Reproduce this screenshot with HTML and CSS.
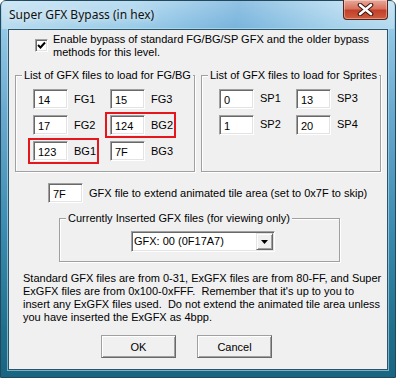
FILE: index.html
```html
<!DOCTYPE html>
<html>
<head>
  <title>Super GFX Bypass (in hex)</title>
  <link rel="stylesheet" href="styles.css">
</head>
<body>
  <div class="window">
    <div class="titlebar">
      <span class="title">Super GFX Bypass (in hex)</span>
      <div class="close">
        <svg width="17" height="13" viewBox="0 0 17 13">
          <path d="M3 2 L14 11 M14 2 L3 11" stroke="#3b1410" stroke-width="4.6" stroke-linecap="round" fill="none"/>
          <path d="M3 2 L14 11 M14 2 L3 11" stroke="#ffffff" stroke-width="2.6" stroke-linecap="round" fill="none"/>
        </svg>
      </div>
    </div>

    <div class="client">
      <div class="check-row">
        <span class="checkbox">
          <svg width="9" height="9" viewBox="0 0 9 9">
            <path d="M1 4 L3.5 6.5 L8 1.5" stroke="#000" stroke-width="2" fill="none"/>
          </svg>
        </span>
        <span class="check-text">Enable bypass of standard FG/BG/SP GFX and the older bypass<br>methods for this level.</span>
      </div>

      <div class="groups">
        <div class="group">
          <div class="group-title">List of GFX files to load for FG/BG</div>
          <div class="grid">
            <div class="cell"><input class="field" value="14"><span>FG1</span></div>
            <div class="cell"><input class="field" value="15"><span>FG3</span></div>
            <div class="cell"><input class="field" value="17"><span>FG2</span></div>
            <div class="cell hl"><input class="field" value="124"><span>BG2</span></div>
            <div class="cell hl"><input class="field" value="123"><span>BG1</span></div>
            <div class="cell"><input class="field" value="7F"><span>BG3</span></div>
          </div>
        </div>

        <div class="group">
          <div class="group-title">List of GFX files to load for Sprites</div>
          <div class="grid sprites">
            <div class="cell"><input class="field" value="0"><span>SP1</span></div>
            <div class="cell"><input class="field" value="13"><span>SP3</span></div>
            <div class="cell"><input class="field" value="1"><span>SP2</span></div>
            <div class="cell"><input class="field" value="20"><span>SP4</span></div>
          </div>
        </div>
      </div>

      <div class="extend-row">
        <input class="field" value="7F">
        <span>GFX file to extend animated tile area (set to 0x7F to skip)</span>
      </div>

      <div class="group viewer">
        <div class="group-title">Currently Inserted GFX files (for viewing only)</div>
        <div class="combo">
          <span class="combo-text">GFX: 00 (0F17A7)</span>
          <span class="combo-btn">
            <svg width="7" height="4" viewBox="0 0 7 4"><path d="M0 0 H7 L3.5 4 Z" fill="#000"/></svg>
          </span>
        </div>
      </div>

      <p class="note">Standard GFX files are from 0-31, ExGFX files are from 80-FF, and Super<br>ExGFX files are from 0x100-0xFFF.&nbsp; Remember that it's up to you to<br>insert any ExGFX files used.&nbsp; Do not extend the animated tile area unless<br>you have inserted the ExGFX as 4bpp.</p>

      <div class="buttons">
        <button class="btn default">OK</button>
        <button class="btn">Cancel</button>
      </div>
    </div>
  </div>
</body>
</html>
```

FILE: styles.css
```css
html, body {
  margin: 0;
  padding: 0;
}

body {
  width: 396px;
  height: 378px;
  overflow: hidden;
  font-family: "Liberation Sans", Arial, sans-serif;
  font-size: 11px;
  color: #000;
}

.window {
  width: 396px;
  height: 378px;
  box-sizing: border-box;
  padding: 0 7px 7px 7px;
  border: 1px solid #23475b;
  border-radius: 6px 6px 0 0;
  background: linear-gradient(180deg, #b6dbf0 0px, #93c8e6 28px, #6aaad0 110px, #3b8bb0 230px, #1f6f8c 330px, #186581 378px);
  display: flex;
  flex-direction: column;
  margin: 0;
}

.titlebar {
  height: 28px;
  display: flex;
  align-items: flex-start;
  margin: 0 -6px 0 -6px;
  padding: 0 6px;
  background: linear-gradient(100deg, rgba(255,255,255,0.35) 0%, rgba(255,255,255,0.05) 35%, rgba(40,120,190,0.25) 60%, rgba(255,255,255,0.15) 85%, rgba(255,255,255,0.3) 100%);
}

.title {
  font-family: "Noto Sans", "Open Sans", sans-serif;
  font-size: 12px;
  line-height: 16px;
  margin: 6px 0 0 1px;
  color: #111;
  text-shadow: 0 0 6px rgba(255,255,255,0.9);
}

.close {
  margin-left: auto;
  width: 43px;
  height: 19px;
  margin-top: -1px;
  border: 1px solid #5a2218;
  border-top: none;
  border-radius: 0 0 4px 4px;
  background: linear-gradient(180deg, #e9a99a 0%, #d8735f 45%, #c2402a 55%, #cf5d3f 100%);
  display: flex;
  align-items: center;
  justify-content: center;
  box-shadow: inset 0 0 0 1px rgba(255,255,255,0.35);
}

.client {
  flex: 1;
  background: #f0f0f0;
  border: 1px solid #2c5468;
  box-shadow: 0 0 0 1px rgba(190,225,240,0.6);
  display: flex;
  flex-direction: column;
}

.check-row {
  display: flex;
  align-items: flex-start;
  padding-left: 26px;
  margin-top: 3px;
  line-height: 13px;
}

.checkbox {
  width: 11px;
  height: 11px;
  margin-top: 6px;
  margin-right: 5px;
  background: #fff;
  border: 1px solid;
  border-color: #a0a0a0 #fff #fff #a0a0a0;
  box-shadow: inset 1px 1px 0 #696969, inset -1px -1px 0 #e3e3e3;
  display: flex;
  align-items: center;
  justify-content: center;
}

.check-text {
  white-space: nowrap;
}

.groups {
  display: flex;
  gap: 6px;
  padding-left: 6px;
  margin-top: 16px;
}

.group {
  width: 180px;
  height: 97px;
  box-sizing: border-box;
  border: 1px solid #a0a0a0;
  box-shadow: inset 1px 1px 0 #fff, 1px 1px 0 #fff;
}

.group-title {
  width: fit-content;
  margin: -7px 0 0 6px;
  padding: 0 2px;
  line-height: 13px;
  background: #f0f0f0;
  white-space: nowrap;
}

.grid {
  display: grid;
  grid-template-columns: 77px 77px;
  row-gap: 6px;
  padding-left: 17px;
  margin-top: 7px;
}

.cell {
  position: relative;
  display: flex;
  align-items: center;
  gap: 6px;
  height: 20px;
}

.sprites .cell span {
  margin-top: -3px;
}

.cell.hl::after {
  content: "";
  position: absolute;
  left: -5px;
  top: -3px;
  bottom: -3px;
  width: 71px;
  box-sizing: border-box;
  border: 2px solid #e5161c;
}

.field {
  width: 35px;
  height: 20px;
  box-sizing: border-box;
  margin: 0;
  padding: 1px 0 0 4px;
  font-family: "Liberation Sans", Arial, sans-serif;
  font-size: 11px;
  color: #000;
  background: #fff;
  border: 1px solid;
  border-color: #a0a0a0 #fff #fff #a0a0a0;
  box-shadow: inset 1px 1px 0 #696969, inset -1px -1px 0 #e3e3e3;
  outline: none;
}

.extend-row {
  display: flex;
  align-items: center;
  gap: 6px;
  padding-left: 39px;
  margin-top: 11px;
  white-space: nowrap;
}

.viewer {
  width: 281px;
  height: 44px;
  margin: 15px 0 0 50px;
}

.combo {
  width: 144px;
  height: 21px;
  box-sizing: border-box;
  margin: 6px 0 0 71px;
  background: #fff;
  border: 1px solid;
  border-color: #a0a0a0 #fff #fff #a0a0a0;
  box-shadow: inset 1px 1px 0 #696969, inset -1px -1px 0 #e3e3e3;
  display: flex;
  align-items: stretch;
}

.combo-text {
  flex: 1;
  padding: 3px 0 0 2px;
}

.combo-btn {
  width: 15px;
  margin: 1px 1px 1px 0;
  background: #f0f0f0;
  border: 1px solid;
  border-color: #e3e3e3 #696969 #696969 #e3e3e3;
  box-shadow: inset 1px 1px 0 #fff, inset -1px -1px 0 #a0a0a0;
  display: flex;
  align-items: center;
  justify-content: center;
}

.note {
  margin: 10px 0 0 0;
  padding-left: 14px;
  line-height: 13px;
  white-space: nowrap;
}

.buttons {
  display: flex;
  gap: 21px;
  padding-left: 92px;
  margin-top: 11px;
}

.btn {
  width: 75px;
  height: 23px;
  margin: 0;
  padding: 0;
  font-family: "Liberation Sans", Arial, sans-serif;
  font-size: 11px;
  color: #000;
  background: #f0f0f0;
  border: 1px solid;
  border-color: #a0a0a0 #696969 #696969 #a0a0a0;
  box-shadow: inset 1px 1px 0 #fff, inset -1px -1px 0 #a0a0a0;
}
```
